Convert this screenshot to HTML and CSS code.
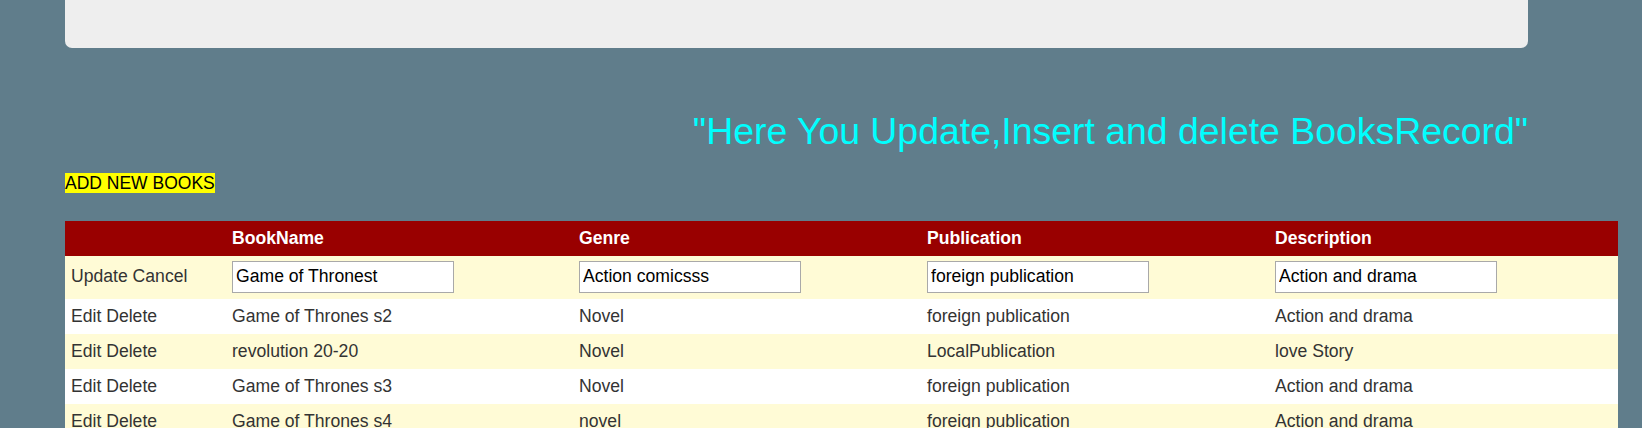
FILE: index.html
```html
<!DOCTYPE html>
<html>
<head>
<meta charset="utf-8">
<title>Books Record</title>
<link rel="stylesheet" href="styles.css">
</head>
<body>
<div class="page">
  <div class="topbox"></div>
  <h2 class="title">"Here You Update,Insert and delete BooksRecord"</h2>
  <div class="addrow"><span class="addbtn">ADD NEW BOOKS</span></div>
  <table class="grid">
    <colgroup>
      <col class="c1"><col class="c2"><col class="c3"><col class="c4"><col class="c5">
    </colgroup>
    <thead>
      <tr class="head"><th></th><th>BookName</th><th>Genre</th><th>Publication</th><th>Description</th></tr>
    </thead>
    <tbody>
      <tr class="row edit">
        <td>Update Cancel</td>
        <td><input class="box" type="text" value="Game of Thronest"></td>
        <td><input class="box" type="text" value="Action comicsss"></td>
        <td><input class="box" type="text" value="foreign publication"></td>
        <td><input class="box" type="text" value="Action and drama"></td>
      </tr>
      <tr class="alt"><td>Edit Delete</td><td>Game of Thrones s2</td><td>Novel</td><td>foreign publication</td><td>Action and drama</td></tr>
      <tr class="row"><td>Edit Delete</td><td>revolution 20-20</td><td>Novel</td><td>LocalPublication</td><td>love Story</td></tr>
      <tr class="alt"><td>Edit Delete</td><td>Game of Thrones s3</td><td>Novel</td><td>foreign publication</td><td>Action and drama</td></tr>
      <tr class="row"><td>Edit Delete</td><td>Game of Thrones s4</td><td>novel</td><td>foreign publication</td><td>Action and drama</td></tr>
    </tbody>
  </table>
</div>
</body>
</html>
```
FILE: styles.css
```css
html, body {
  margin: 0;
  padding: 0;
  background: #607d8b;
  font-family: "Liberation Sans", Arial, sans-serif;
}
.page {
  margin-left: 65px;
  width: 1463px;
}
.topbox {
  height: 48px;
  background: #eeeeee;
  border-radius: 0 0 7px 7px;
}
.title {
  margin: 62px 0 0 0;
  font-size: 37.4px;
  font-weight: normal;
  color: #00ffff;
  text-align: right;
  line-height: 42px;
}
.addrow {
  margin-top: 21px;
  font-size: 17.5px;
  line-height: 20px;
  height: 20px;
}
.addbtn {
  background: #ffff00;
  color: #000000;
}
.grid {
  margin-top: 28px;
  width: 1553px;
  table-layout: fixed;
  border-collapse: collapse;
  font-size: 17.6px;
  color: #333333;
}
.c1 { width: 161px; }
.c2 { width: 347px; }
.c3 { width: 348px; }
.c4 { width: 348px; }
.c5 { width: 349px; }
.grid th, .grid td {
  padding: 0 6px;
  text-align: left;
  white-space: nowrap;
  vertical-align: middle;
}
.head {
  background: #990000;
  color: #ffffff;
  height: 35px;
}
.grid th { font-weight: bold; }
.row { background: #fffbd6; height: 35px; }
.alt { background: #ffffff; height: 35px; }
.edit { height: 43px; }
.edit td { padding-bottom: 2px; }
.box {
  display: block;
  box-sizing: border-box;
  width: 222px;
  height: 32px;
  margin: 0;
  padding: 0 3px;
  border: 1px solid #a9a9a9;
  background: #ffffff;
  font-family: "Liberation Sans", Arial, sans-serif;
  font-size: 17.6px;
  color: #000000;
}
```
